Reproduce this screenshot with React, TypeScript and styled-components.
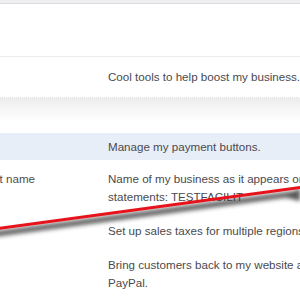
import styled, { createGlobalStyle } from "styled-components";

const GlobalStyle = createGlobalStyle`
  html, body {
    margin: 0;
    padding: 0;
    background: #fff;
    overflow: hidden;
  }
  body {
    font-family: "Liberation Sans", Arial, sans-serif;
  }
`;

type RowKind = "plain" | "highlight" | "detail";

const rows: { label: string; lines: string[] }[] = [
  { label: "Credit card statement name", lines: ["Name of my business as it appears on customers' credit card", "statements: TESTFACILIT"] },
  { label: "", lines: ["Set up sales taxes for multiple regions."] },
  { label: "", lines: ["Bring customers back to my website after they pay with", "PayPal."] },
];

export default function App() {
  return (
    <>
      <GlobalStyle />
      <Page>
        <TopEdge />
        <Blank />
        <Table>
          <Row $kind="plain">
            <Label />
            <Value>Cool tools to help boost my business.</Value>
          </Row>
          <SectionBand />
          <Row $kind="highlight">
            <Label />
            <Value>Manage my payment buttons.</Value>
          </Row>
          {rows.map((r, idx) => (
            <Row key={idx} $kind="detail">
              <Label>{r.label}</Label>
              <Value>
                {r.lines.map((l, i) => (
                  <div key={i}>{l}</div>
                ))}
              </Value>
            </Row>
          ))}
        </Table>
        <Arrow viewBox="0 0 300 300" width="300" height="300">
          <defs>
            <filter id="soft" x="-10%" y="-100%" width="120%" height="300%">
              <feGaussianBlur stdDeviation="2" />
            </filter>
          </defs>
          <g filter="url(#soft)" opacity="0.8">
            <line x1="-5" y1="234" x2="300" y2="193" stroke="#383838" strokeWidth="5.5" />
            <polygon points="284,197 300,188 300,201" fill="#2a2a2a" />
          </g>
          <line x1="-5" y1="229" x2="305" y2="186.8" stroke="#e8121a" strokeWidth="3" />
        </Arrow>
      </Page>
    </>
  );
}

const Page = styled.div`
  position: relative;
  width: 300px;
  height: 300px;
  overflow: hidden;
`;

const TopEdge = styled.div`
  height: 3px;
  background: #eeeef0;
  border-bottom: 1px solid #dadadc;
`;

const Blank = styled.div`
  height: 52px;
  border-bottom: 1px solid #ececec;
`;

const Table = styled.div`
  margin-left: -121px;
  width: 560px;
`;

const Row = styled.div<{ $kind: RowKind }>`
  display: grid;
  grid-template-columns: 229px 1fr;
  align-items: ${(p) => (p.$kind === "detail" ? "start" : "center")};
  height: ${(p) => (p.$kind === "plain" ? "40px" : p.$kind === "highlight" ? "27px" : "auto")};
  padding: ${(p) => (p.$kind === "detail" ? "9.5px 0 6.5px" : "0")};
  background: ${(p) => (p.$kind === "highlight" ? "#e8eef8" : "transparent")};
  border-bottom: ${(p) => (p.$kind === "plain" ? "1px dotted #e2e2e2" : "none")};
`;

const SectionBand = styled.div`
  height: 35px;
  background: linear-gradient(to bottom, #ebebeb 0, #f3f3f3 7px, #fff 24px);
`;

const Label = styled.div`
  padding-left: 13px;
  font-size: 11.6px;
  line-height: 18px;
  color: #4e4e4e;
  white-space: nowrap;
`;

const Value = styled.div`
  font-size: 11.6px;
  line-height: 18px;
  color: #4a4a4e;
  white-space: nowrap;
`;

const Arrow = styled.svg`
  position: absolute;
  top: 0;
  left: 0;
  pointer-events: none;
`;
